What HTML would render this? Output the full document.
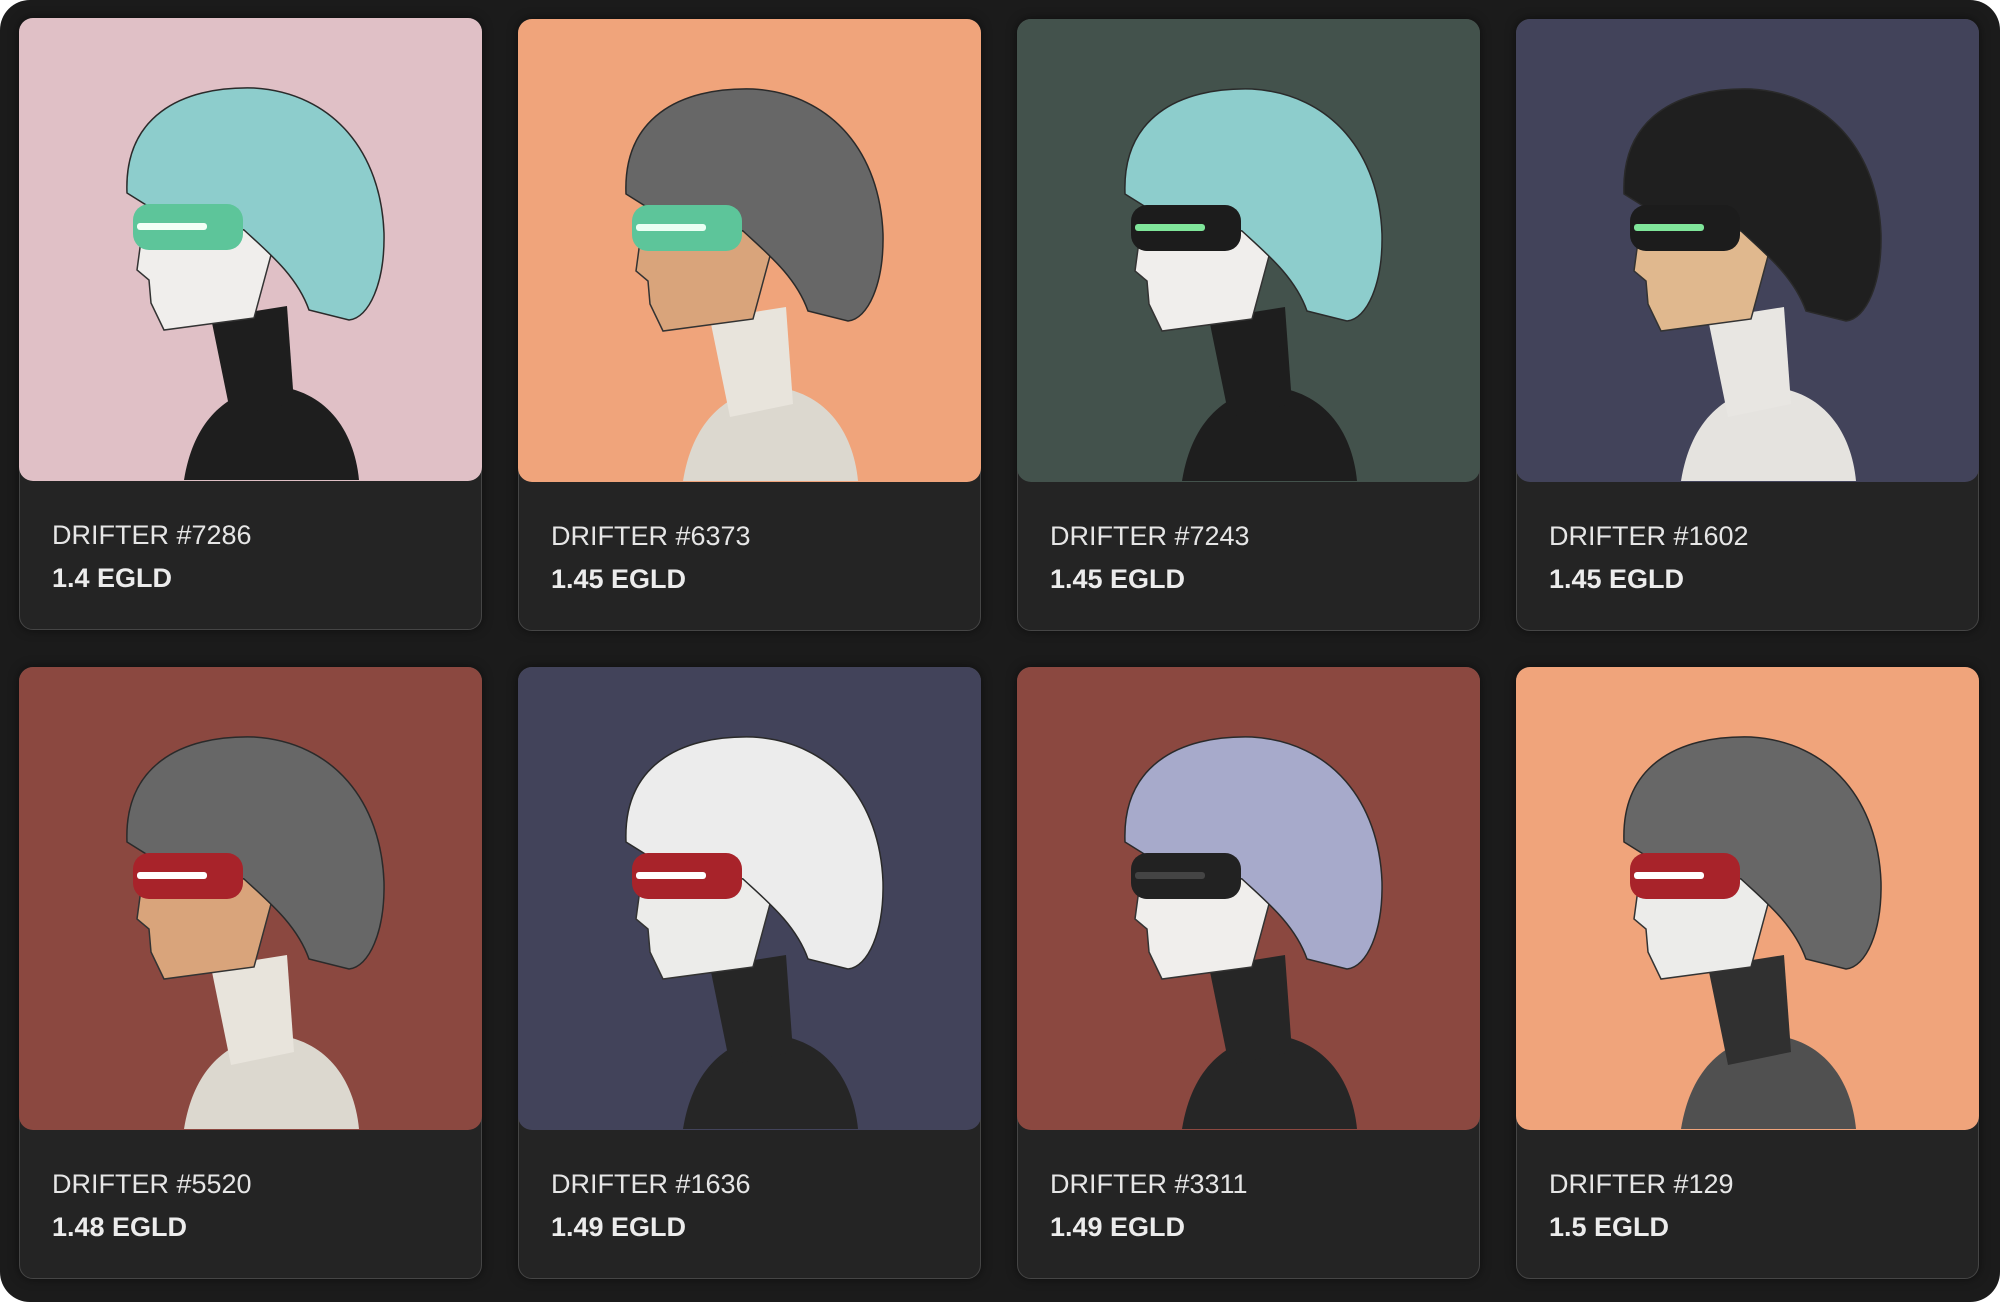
<!DOCTYPE html>
<html><head><meta charset="utf-8"><style>
html,body{margin:0;padding:0;background:#fff;}
.page{position:relative;width:2000px;height:1302px;background:#1b1b1b;border-radius:30px;overflow:hidden;font-family:"Liberation Sans",sans-serif;}
.card{position:absolute;width:461px;height:610px;background:#242424;border:1px solid #454545;border-radius:14px;box-shadow:0 0 10px rgba(0,0,0,.5);}
.img{position:absolute;left:-1px;top:-1px;width:463px;height:463px;border-radius:14px;overflow:hidden;}
.img svg{display:block}
.name{position:absolute;left:32px;top:502px;font-size:27px;line-height:28px;color:#e6e6e6;}
.price{position:absolute;left:32px;top:545px;font-size:27px;line-height:29px;font-weight:bold;color:#ececec;}
</style></head><body><div class="page">
<svg width="0" height="0" style="position:absolute">
<defs>
<symbol id="fig" viewBox="0 0 463 462">
<path d="M165 462 C175 400 210 372 255 368 C305 372 335 410 340 462 Z" style="fill:var(--body)"/>
<path d="M192 300 L268 288 L275 385 L212 398 Z" style="fill:var(--neck)"/>
<path d="M125 200 L118 252 L130 262 L132 285 L145 312 L235 300 L262 200 Z" style="fill:var(--skin)" stroke="#333" stroke-width="1.5"/>
<path d="M108 175 C105 100 160 68 235 70 C315 75 362 135 365 215 C366 265 350 300 330 302 L290 292 C278 258 250 235 225 212 L140 195 Z" style="fill:var(--hair)" stroke="#2a2a2a" stroke-width="1.5"/>
<rect x="114" y="186" width="110" height="46" rx="16" style="fill:var(--visor)"/>
<rect x="118" y="205" width="70" height="7" rx="3" style="fill:var(--line)"/>
</symbol>
</defs></svg>

<div class="card" style="left:19px;top:18px"><div class="img" style="background:#e0c0c6"><svg width="463" height="462" style="--hair:#8dcdcc;--skin:#f0eeec;--neck:#1e1e1e;--body:#1e1e1e;--visor:#5dc59a;--line:#f2fff6"><use href="#fig"/></svg></div><div class="name">DRIFTER #7286</div><div class="price">1.4 EGLD</div></div>
<div class="card" style="left:518px;top:19px"><div class="img" style="background:#f0a47b"><svg width="463" height="462" style="--hair:#676767;--skin:#d9a47b;--neck:#e8e4dc;--body:#dcd8cf;--visor:#5dc59a;--line:#eafff3"><use href="#fig"/></svg></div><div class="name">DRIFTER #6373</div><div class="price">1.45 EGLD</div></div>
<div class="card" style="left:1017px;top:19px"><div class="img" style="background:#43524c"><svg width="463" height="462" style="--hair:#8dcdcc;--skin:#f0eeec;--neck:#1e1e1e;--body:#1e1e1e;--visor:#1c1c1c;--line:#7fe59a"><use href="#fig"/></svg></div><div class="name">DRIFTER #7243</div><div class="price">1.45 EGLD</div></div>
<div class="card" style="left:1516px;top:19px"><div class="img" style="background:#42435a"><svg width="463" height="462" style="--hair:#1f1f1f;--skin:#e0b88e;--neck:#e8e6e2;--body:#e5e3df;--visor:#1c1c1c;--line:#7fe59a"><use href="#fig"/></svg></div><div class="name">DRIFTER #1602</div><div class="price">1.45 EGLD</div></div>

<div class="card" style="left:19px;top:667px"><div class="img" style="background:#8b4840"><svg width="463" height="462" style="--hair:#676767;--skin:#d9a47b;--neck:#e8e4dc;--body:#dcd8cf;--visor:#a8232a;--line:#fff"><use href="#fig"/></svg></div><div class="name">DRIFTER #5520</div><div class="price">1.48 EGLD</div></div>
<div class="card" style="left:518px;top:667px"><div class="img" style="background:#42435a"><svg width="463" height="462" style="--hair:#ececec;--skin:#ececea;--neck:#262626;--body:#262626;--visor:#a8232a;--line:#fff"><use href="#fig"/></svg></div><div class="name">DRIFTER #1636</div><div class="price">1.49 EGLD</div></div>
<div class="card" style="left:1017px;top:667px"><div class="img" style="background:#8b4840"><svg width="463" height="462" style="--hair:#a7aacb;--skin:#f0eeec;--neck:#262626;--body:#262626;--visor:#222;--line:#444"><use href="#fig"/></svg></div><div class="name">DRIFTER #3311</div><div class="price">1.49 EGLD</div></div>
<div class="card" style="left:1516px;top:667px"><div class="img" style="background:#f0a47b"><svg width="463" height="462" style="--hair:#676767;--skin:#ececea;--neck:#303030;--body:#505050;--visor:#a8232a;--line:#fff"><use href="#fig"/></svg></div><div class="name">DRIFTER #129</div><div class="price">1.5 EGLD</div></div>
</div></body></html>
